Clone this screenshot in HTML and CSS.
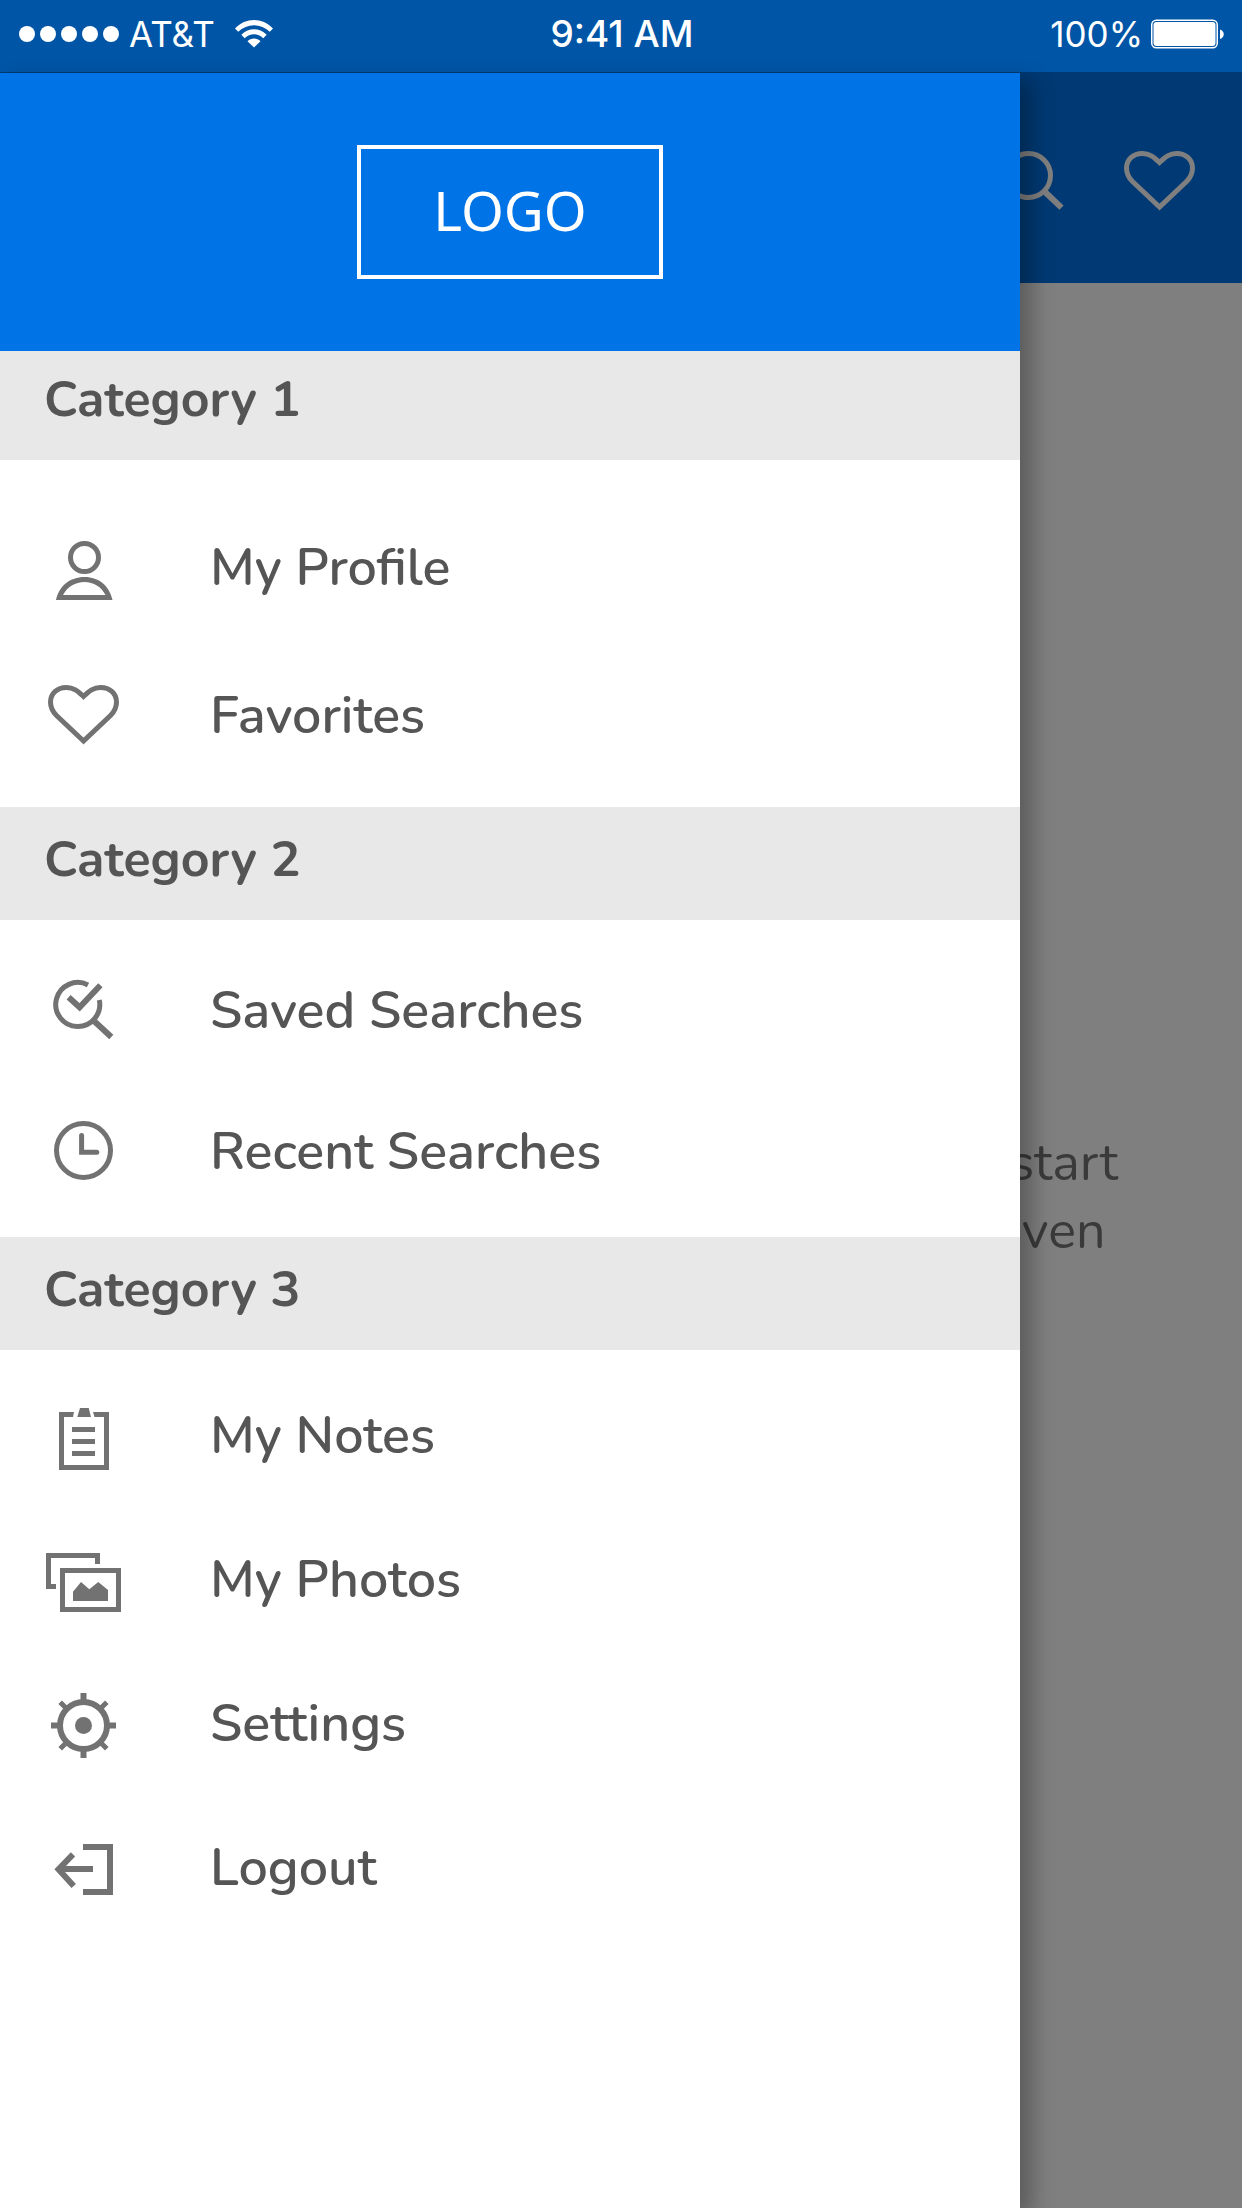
FILE: index.html
```html
<!DOCTYPE html>
<html lang="en">
<head>
<meta charset="utf-8">
<meta name="viewport" content="width=device-width, initial-scale=1">
<title>Menu</title>
<link rel="stylesheet" href="styles.css">
</head>
<body>
<div class="app">
  <div class="status-bar">
    <div class="status-left">
      <svg class="signal" viewBox="0 0 100 16" aria-hidden="true"><circle cx="8" cy="8" r="8"/><circle cx="29" cy="8" r="8"/><circle cx="50" cy="8" r="8"/><circle cx="71" cy="8" r="8"/><circle cx="92" cy="8" r="8"/></svg>
      <span>AT&amp;T</span>
      <svg class="wifi" viewBox="0 0 38 28" aria-hidden="true"><path d="M0 8.500C11 -2.800 27 -2.800 38 8.500L34.800 11.800C26 3 12 3 3.200 11.800Z"/><path d="M6.300 14.800C14 7.500 24 7.500 31.700 14.800L28.300 18.200C23 13 15 13 9.700 18.200Z"/><path d="M12.500 21.200C16 17.600 22 17.600 25.500 21.200L19 27.500Z"/></svg>
    </div>
    <time class="status-time">9:41 AM</time>
    <div class="status-right">
      <span>100%</span>
      <svg class="battery" viewBox="0 0 74 30" aria-hidden="true"><rect x="0.750" y="1.250" width="65.500" height="27.500" rx="4.500" fill="none" stroke="#fff" stroke-width="1.500"/><rect x="2.500" y="3" width="62" height="24" rx="3"/><path d="M69 10.500C74 12 74 18.500 69 20Z"/></svg>
    </div>
  </div>

  <main class="screen">
    <header class="app-bar">
      <button class="icon-button" type="button" aria-label="Search">
        <svg class="icon" viewBox="0 0 80 80"><circle cx="33.500" cy="34.500" r="22"/><path class="heavy" d="M49.500 50.500L66.500 66.700"/></svg>
      </button>
      <button class="icon-button" type="button" aria-label="Favorites">
        <svg class="icon" viewBox="0 0 80 80"><path d="M39.500 66L12.500 40.500C9 37 6.500 32.500 6.500 27C6.500 18.500 13 12.500 22.500 12.500C30 12.500 34 16.500 39.500 21.500C45 16.500 49 12.500 56.500 12.500C66 12.500 72.500 18.500 72.500 27C72.500 32.500 70 37 66.500 40.500Z"/></svg>
      </button>
    </header>
    <p class="hint">start<br>ven</p>
  </main>
  <div class="scrim"></div>

  <nav class="drawer" aria-label="Main menu">
    <div class="drawer-header"><a class="logo" href="#">LOGO</a></div>

    <section class="group group-account">
      <h2 class="group-title">Category 1</h2>
      <ul class="menu">
        <li><a class="menu-item" href="#">
          <svg class="icon" viewBox="0 0 80 80"><circle cx="40.500" cy="30.500" r="14"/><path class="solid" d="M12 73C15 59 26 50 40.500 50S65.500 59 68.500 73ZM19 68H61.500C57.500 60 49.500 55 40.500 55S23 60 19 68Z"/></svg>
          <span>My Profile</span></a></li>
        <li><a class="menu-item" href="#">
          <svg class="icon" viewBox="0 0 80 80"><path d="M39.500 66L12.500 40.500C9 37 6.500 32.500 6.500 27C6.500 18.500 13 12.500 22.500 12.500C30 12.500 34 16.500 39.500 21.500C45 16.500 49 12.500 56.500 12.500C66 12.500 72.500 18.500 72.500 27C72.500 32.500 70 37 66.500 40.500Z"/></svg>
          <span>Favorites</span></a></li>
      </ul>
    </section>

    <section class="group group-searches">
      <h2 class="group-title">Category 2</h2>
      <ul class="menu">
        <li><a class="menu-item" href="#">
          <svg class="icon" viewBox="0 0 80 80"><path d="M55.300 30A22 22 0 1 1 44 15"/><path class="heavy" d="M49.500 50.500L67.300 67"/><path class="heavy" d="M24.600 27.300L35.600 37.300L56.400 15.300"/></svg>
          <span>Saved Searches</span></a></li>
        <li><a class="menu-item" href="#">
          <svg class="icon" viewBox="0 0 80 80"><circle cx="39.500" cy="39.500" r="27"/><path stroke-linecap="round" d="M37.600 24.500V41.300H52.800"/></svg>
          <span>Recent Searches</span></a></li>
      </ul>
    </section>

    <section class="group group-library">
      <h2 class="group-title">Category 3</h2>
      <ul class="menu">
        <li><a class="menu-item" href="#">
          <svg class="icon" viewBox="0 0 80 80"><path class="solid" d="M15 17H30L29 22H20V70H60V22H50.500L49 17H65V75H15ZM36 13H44.700L47 22H33.300ZM28 32H51V37H28ZM28 44H51V49H28ZM28 56H51V61H28Z"/></svg>
          <span>My Notes</span></a></li>
        <li><a class="menu-item" href="#">
          <svg class="icon" viewBox="0 0 80 80"><path class="solid" d="M2 14H56V25H51V19H7V45H12V50H2ZM16 29H77V73H16ZM21 34V68H72V34ZM29 62V52.700L37 43L45.300 50.300L54.300 43L64 51V62Z"/></svg>
          <span>My Photos</span></a></li>
        <li><a class="menu-item" href="#">
          <svg class="icon" viewBox="0 0 80 80"><circle class="heavy" cx="39.500" cy="42.500" r="23.500"/><circle class="solid" cx="39.500" cy="42.500" r="8.500"/><path class="heavy" d="M39.500 10V18M39.500 67V75M7 42.500H15M64 42.500H72"/><path d="M16.200 19.200L23 26M62.800 19.200L56 26M16.200 65.800L23 59M62.800 65.800L56 59"/></svg>
          <span>Settings</span></a></li>
        <li><a class="menu-item" href="#">
          <svg class="icon" viewBox="0 0 80 80"><path class="solid" d="M39 17H69V68H39V62H63V23H39Z"/><path class="heavy" d="M29 27.300L14.500 42.300L29.700 59M16 42H49"/></svg>
          <span>Logout</span></a></li>
      </ul>
    </section>
  </nav>
</div>
</body>
</html>
```
FILE: styles.css
```css
* { box-sizing: border-box; }

body {
  margin: 0;
  font-family: Nunito, "Open Sans", sans-serif;
  color: #555;
}

.app {
  position: relative;
  display: flex;
  flex-direction: column;
  min-height: 100vh;
  overflow: hidden;
}

/* Status bar */
.status-bar {
  display: grid;
  grid-template-columns: 1fr auto 1fr;
  align-items: center;
  height: 72px;
  padding: 0 17px 4px 19px;
  background: #0055a6;
  color: #fff;
  font: 400 35px/40px Inter, sans-serif;
}

.status-bar svg { fill: #fff; }

.status-left,
.status-right {
  display: flex;
  align-items: center;
}

.status-left { gap: 10px; }
.status-right { justify-content: flex-end; gap: 8px; }
.status-time { font-weight: 500; font-size: 37px; }
.signal { width: 100px; height: 16px; }
.wifi { width: 38px; height: 28px; margin-left: 10px; }
.battery { width: 74px; height: 30px; }

/* Screen behind the drawer */
.screen {
  flex: 1;
  background: #fff;
}

.app-bar {
  display: flex;
  justify-content: flex-end;
  gap: 45px;
  padding: 69px 42px 62px;
  background: #0073e6;
  color: #fff;
}

.icon-button {
  display: block;
  padding: 0;
  border: 0;
  background: none;
  color: inherit;
}

.hint {
  width: max-content;
  margin: 846px 124px 0 auto;
  color: #747474;
  font-size: 52px;
  line-height: 68px;
  text-align: center;
}

.scrim {
  position: absolute;
  inset: 72px 0 0;
  background: rgba(0, 0, 0, 0.5);
}

/* Icons */
.icon {
  display: block;
  flex: none;
  width: 80px;
  height: 80px;
  fill: none;
  stroke: currentColor;
  stroke-width: 5px;
}

.icon .heavy { stroke-width: 6px; }

.icon .solid {
  fill: currentColor;
  fill-rule: evenodd;
  stroke: none;
}

/* Drawer */
.drawer {
  position: absolute;
  inset: 73px 222px 0 0;
  background: #fff;
  box-shadow: 12px 8px 20px rgba(0, 0, 0, 0.28);
}

.drawer-header {
  position: relative;
  z-index: 1;
  display: flex;
  justify-content: center;
  padding: 72px 0;
  background: #0073e6;
}

.logo {
  width: 306px;
  padding-bottom: 4px;
  border: 4px solid #fff;
  color: #fff;
  font: 400 55px/122px "Noto Sans", sans-serif;
  text-align: center;
  text-decoration: none;
}

.group-title {
  margin: 0;
  padding: 19px 44px 26px;
  background: #e8e8e8;
  font-size: 50px;
  font-weight: 700;
  line-height: 68px;
}

/* The first band tucks under the drawer header */
.group-account { margin-top: -4px; }

.menu {
  display: flex;
  flex-direction: column;
  margin: 0;
  padding: 0;
  list-style: none;
}

.group-account .menu { gap: 28px; padding: 47px 0 32px; }
.group-searches .menu { gap: 21px; padding: 30px 0 26px; }
.group-library .menu { gap: 24px; padding: 25px 0; }

.menu-item {
  display: flex;
  align-items: center;
  gap: 86px;
  height: 120px;
  padding: 0 44px;
  color: #555;
  font-size: 52px;
  font-weight: 600;
  line-height: 68px;
  text-decoration: none;
}

.menu-item span { padding-top: 2px; }

.menu-item .icon { color: #727272; }
```
